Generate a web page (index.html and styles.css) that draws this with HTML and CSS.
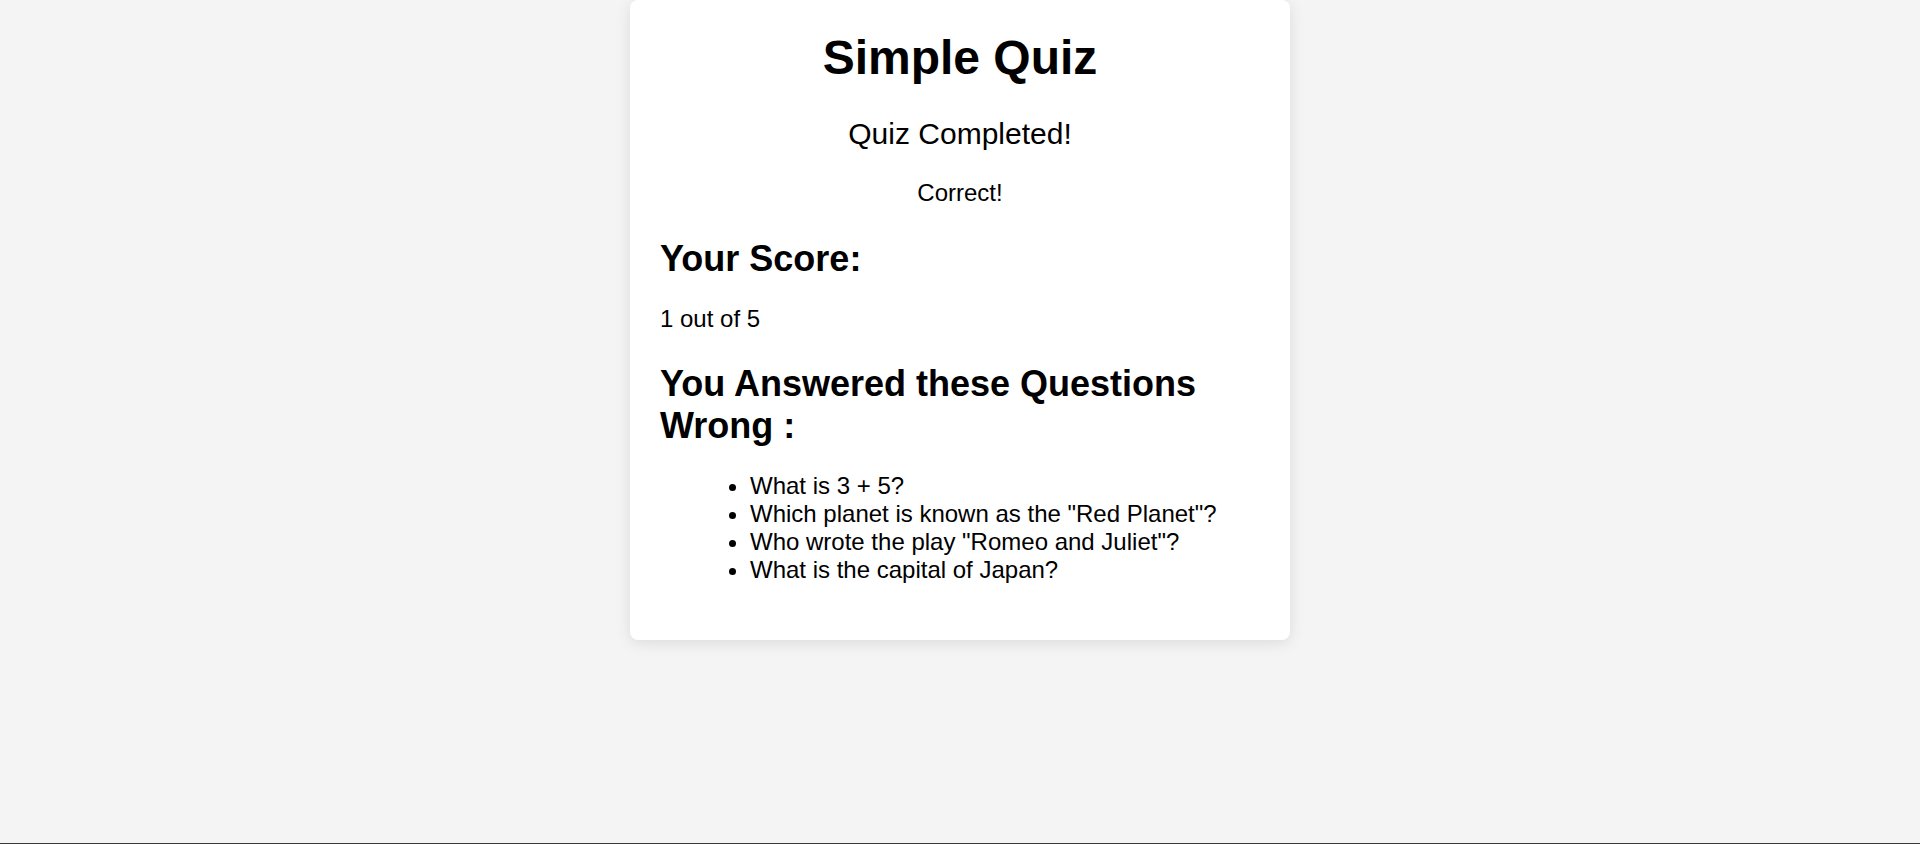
FILE: index.html
```html
<!DOCTYPE html>
<html lang="en">
<head>
<meta charset="utf-8">
<title>Simple Quiz</title>
<link rel="stylesheet" href="styles.css">
</head>
<body>
<main class="quiz-card">
  <h1 class="quiz-title">Simple Quiz</h1>
  <p class="quiz-status">Quiz Completed!</p>
  <p class="quiz-feedback">Correct!</p>
  <h2 class="section-title score-title">Your Score:</h2>
  <p class="score-text">1 out of 5</p>
  <h2 class="section-title wrong-title">You Answered these Questions Wrong :</h2>
  <ul class="wrong-list">
    <li>What is 3 + 5?</li>
    <li>Which planet is known as the "Red Planet"?</li>
    <li>Who wrote the play "Romeo and Juliet"?</li>
    <li>What is the capital of Japan?</li>
  </ul>
</main>
<div class="window-edge"></div>
</body>
</html>
```
FILE: styles.css
```css
html, body {
  margin: 0;
  padding: 0;
}
body {
  background: #f4f4f4;
  font-family: "Liberation Sans", Arial, sans-serif;
  font-size: 24px;
  color: #000;
  min-height: 844px;
  display: flex;
  flex-direction: column;
  align-items: center;
}
.quiz-card {
  width: 600px;
  padding: 30px;
  background: #fff;
  border-radius: 8px;
  box-shadow: 0 3px 15px rgba(0, 0, 0, 0.1);
}
.quiz-title {
  font-size: 48px;
  font-weight: bold;
  text-align: center;
  margin: 0 0 32.2px;
}
.quiz-status {
  font-size: 30px;
  text-align: center;
  margin: 0 0 28.3px;
}
.quiz-feedback {
  font-size: 24px;
  text-align: center;
  margin: 0 0 31px;
}
.section-title {
  font-size: 36px;
  font-weight: bold;
  margin: 0;
}
.score-title {
  margin-bottom: 25px;
}
.score-text {
  margin: 0 0 29.6px;
}
.wrong-title {
  margin-bottom: 25px;
}
.wrong-list {
  margin: 0 0 26px;
  padding-left: 90px;
}
.window-edge {
  position: fixed;
  left: 0;
  right: 0;
  bottom: 0;
  height: 1px;
  background: #3a3a3a;
}
```
